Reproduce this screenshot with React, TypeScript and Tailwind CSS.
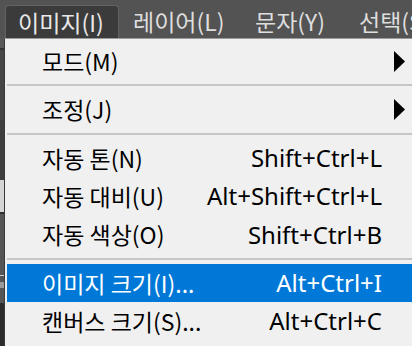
import React from 'react';

const KR = { fontFamily: '"Noto Sans CJK KR", "Noto Sans", sans-serif' };
const LAT = { fontFamily: '"Noto Sans", "Open Sans", sans-serif' };

type Item = {
  label: string;
  shortcut?: string;
  submenu?: boolean;
  active?: boolean;
  h: string;
};

const groups: Item[][] = [
  [{ label: '모드(M)', submenu: true, h: 'h-[38px]' }],
  [{ label: '조정(J)', submenu: true, h: 'h-[39px]' }],
  [
    { label: '자동 톤(N)', shortcut: 'Shift+Ctrl+L', h: 'h-[38px]' },
    { label: '자동 대비(U)', shortcut: 'Alt+Shift+Ctrl+L', h: 'h-[38px]' },
    { label: '자동 색상(O)', shortcut: 'Shift+Ctrl+B', h: 'h-[39px]' },
  ],
  [
    { label: '이미지 크기(I)...', shortcut: 'Alt+Ctrl+I', active: true, h: 'h-[38px]' },
    { label: '캔버스 크기(S)...', shortcut: 'Alt+Ctrl+C', h: 'h-[38px]' },
  ],
];

function Arrow() {
  return (
    <svg width="11" height="21" viewBox="0 0 11 21" className="shrink-0">
      <polygon points="0,0 11,10.5 0,21" fill="#000" />
    </svg>
  );
}

function MenuRow({ item }: { item: Item }) {
  return (
    <div
      className={`${item.h} flex items-center pl-[35px] pr-[7px] ${
        item.active ? 'bg-[#0078d7] text-white' : 'text-black'
      }`}
    >
      <span className="flex-1 text-[23px] leading-none whitespace-nowrap" style={KR}>
        {item.label}
      </span>
      {item.shortcut && (
        <span className="mr-[23px] text-[24px] leading-none whitespace-nowrap" style={LAT}>
          {item.shortcut}
        </span>
      )}
      {item.submenu && <Arrow />}
    </div>
  );
}

function Separator() {
  return (
    <div className="py-[4px]">
      <div className="h-[2px] bg-[#c6c6c6]" />
    </div>
  );
}

export default function App() {
  return (
    <div className="w-[412px] h-[346px] overflow-hidden bg-[#535353] flex flex-col">
      {/* menu bar */}
      <div className="h-[38px] flex items-end pl-[5px] shrink-0 overflow-hidden">
        <div
          className="h-[33px] w-[114px] shrink-0 flex items-center pl-[12px] bg-[#3b3b3b] border border-b-0 border-[#626262] rounded-t-[4px] text-[23px] leading-none text-[#e8e8e8] whitespace-nowrap"
          style={KR}
        >
          이미지(I)
        </div>
        <div className="h-[33px] w-[123px] shrink-0 flex items-center pl-[14px] text-[23px] leading-none text-[#dedede] whitespace-nowrap" style={KR}>
          레이어(L)
        </div>
        <div className="h-[33px] w-[102px] shrink-0 flex items-center pl-[13px] text-[23px] leading-none text-[#dedede] whitespace-nowrap" style={KR}>
          문자(Y)
        </div>
        <div className="h-[33px] shrink-0 flex items-center pl-[15px] text-[23px] leading-none text-[#dedede] whitespace-nowrap" style={KR}>
          선택(S)
        </div>
      </div>

      <div className="flex flex-1 min-h-0">
        {/* bits of the workspace behind the menu */}
        <div className="w-[4px] flex flex-col shrink-0">
          <div className="h-[10px] bg-[#585858]" />
          <div className="h-[2px] bg-[#333]" />
          <div className="h-[70px] bg-[#464646]" />
          <div className="h-[60px] bg-[#3e3e3e]" />
          <div className="h-[32px] bg-[#d5d5d5]" />
          <div className="h-[2px] bg-[#2f2f2f]" />
          <div className="h-[89px] bg-[#555] flex flex-col pt-[61px] gap-[6px]">
            <div className="h-[1px] bg-[#cfcfcf]" />
            <div className="h-[6px] bg-[#9a9a9a]" />
          </div>
          <div className="flex-1 bg-[#2b2b2b]" />
        </div>

        {/* dropdown */}
        <div className="flex-1 bg-[#f0f0f0] border-l border-t border-l-[#3a3a3a] border-t-[#9b9b9b] pl-[2px] pt-[3px]">
          {groups.map((g, i) => (
            <div key={i}>
              {i > 0 && <Separator />}
              {g.map(item => (
                <MenuRow key={item.label} item={item} />
              ))}
            </div>
          ))}
        </div>
      </div>
    </div>
  );
}
